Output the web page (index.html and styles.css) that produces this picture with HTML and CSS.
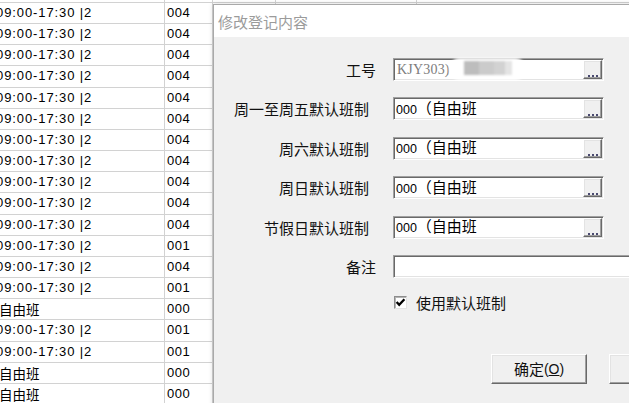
FILE: index.html
```html
<!DOCTYPE html>
<html>
<head>
<meta charset="utf-8">
<link rel="stylesheet" href="styles.css">
</head>
<body>
<div class="sheet">
  <div class="cell">09:00-17:30 |2</div><div class="cell c2">004</div><div class="cell"></div><div class="cell"></div><div class="cell"></div>
  <div class="cell">09:00-17:30 |2</div><div class="cell c2">004</div><div class="cell"></div><div class="cell"></div><div class="cell"></div>
  <div class="cell">09:00-17:30 |2</div><div class="cell c2">004</div><div class="cell"></div><div class="cell"></div><div class="cell"></div>
  <div class="cell">09:00-17:30 |2</div><div class="cell c2">004</div><div class="cell"></div><div class="cell"></div><div class="cell"></div>
  <div class="cell">09:00-17:30 |2</div><div class="cell c2">004</div><div class="cell"></div><div class="cell"></div><div class="cell"></div>
  <div class="cell">09:00-17:30 |2</div><div class="cell c2">004</div><div class="cell"></div><div class="cell"></div><div class="cell"></div>
  <div class="cell">09:00-17:30 |2</div><div class="cell c2">004</div><div class="cell"></div><div class="cell"></div><div class="cell"></div>
  <div class="cell">09:00-17:30 |2</div><div class="cell c2">004</div><div class="cell"></div><div class="cell"></div><div class="cell"></div>
  <div class="cell">09:00-17:30 |2</div><div class="cell c2">004</div><div class="cell"></div><div class="cell"></div><div class="cell"></div>
  <div class="cell">09:00-17:30 |2</div><div class="cell c2">004</div><div class="cell"></div><div class="cell"></div><div class="cell"></div>
  <div class="cell">09:00-17:30 |2</div><div class="cell c2">004</div><div class="cell"></div><div class="cell"></div><div class="cell"></div>
  <div class="cell">09:00-17:30 |2</div><div class="cell c2">004</div><div class="cell"></div><div class="cell"></div><div class="cell"></div>
  <div class="cell">09:00-17:30 |2</div><div class="cell c2">001</div><div class="cell"></div><div class="cell"></div><div class="cell"></div>
  <div class="cell">09:00-17:30 |2</div><div class="cell c2">004</div><div class="cell"></div><div class="cell"></div><div class="cell"></div>
  <div class="cell">09:00-17:30 |2</div><div class="cell c2">001</div><div class="cell"></div><div class="cell"></div><div class="cell"></div>
  <div class="cell cjk">自由班</div><div class="cell c2">000</div><div class="cell"></div><div class="cell"></div><div class="cell"></div>
  <div class="cell">09:00-17:30 |2</div><div class="cell c2">001</div><div class="cell"></div><div class="cell"></div><div class="cell"></div>
  <div class="cell">09:00-17:30 |2</div><div class="cell c2">001</div><div class="cell"></div><div class="cell"></div><div class="cell"></div>
  <div class="cell cjk">自由班</div><div class="cell c2">000</div><div class="cell"></div><div class="cell"></div><div class="cell"></div>
  <div class="cell cjk">自由班</div><div class="cell c2">000</div><div class="cell"></div><div class="cell"></div><div class="cell"></div>
</div>

<div class="dialog">
  <div class="titlebar">修改登记内容</div>
  <div class="dlg-body">
    <div class="form">
      <div class="lbl short">工号</div>
      <div class="field">
        <span class="code">KJY303)</span>
        <span class="redact"><span class="redact-blocks"></span></span>
        <span class="dots-btn"><svg width="17" height="17" viewBox="0 0 17 17"><rect x="4" y="14" width="2" height="2" fill="#4a4a70"/><rect x="8" y="14" width="2" height="2" fill="#4a4a70"/><rect x="12" y="14" width="2" height="2" fill="#4a4a70"/></svg></span>
      </div>

      <div class="lbl">周一至周五默认班制</div>
      <div class="field"><span class="val"><span class="num">000</span>（自由班</span><span class="dots-btn"><svg width="17" height="17" viewBox="0 0 17 17"><rect x="4" y="14" width="2" height="2" fill="#4a4a70"/><rect x="8" y="14" width="2" height="2" fill="#4a4a70"/><rect x="12" y="14" width="2" height="2" fill="#4a4a70"/></svg></span></div>

      <div class="lbl">周六默认班制</div>
      <div class="field"><span class="val"><span class="num">000</span>（自由班</span><span class="dots-btn"><svg width="17" height="17" viewBox="0 0 17 17"><rect x="4" y="14" width="2" height="2" fill="#4a4a70"/><rect x="8" y="14" width="2" height="2" fill="#4a4a70"/><rect x="12" y="14" width="2" height="2" fill="#4a4a70"/></svg></span></div>

      <div class="lbl">周日默认班制</div>
      <div class="field"><span class="val"><span class="num">000</span>（自由班</span><span class="dots-btn"><svg width="17" height="17" viewBox="0 0 17 17"><rect x="4" y="14" width="2" height="2" fill="#4a4a70"/><rect x="8" y="14" width="2" height="2" fill="#4a4a70"/><rect x="12" y="14" width="2" height="2" fill="#4a4a70"/></svg></span></div>

      <div class="lbl">节假日默认班制</div>
      <div class="field"><span class="val"><span class="num">000</span>（自由班</span><span class="dots-btn"><svg width="17" height="17" viewBox="0 0 17 17"><rect x="4" y="14" width="2" height="2" fill="#4a4a70"/><rect x="8" y="14" width="2" height="2" fill="#4a4a70"/><rect x="12" y="14" width="2" height="2" fill="#4a4a70"/></svg></span></div>

      <div class="lbl short">备注</div>
      <div class="field wide"></div>
    </div>

    <div class="check-row">
      <span class="checkbox"><svg width="11" height="11" viewBox="0 0 11 11"><path d="M1.6 5 L4.2 7.8 L9.4 2.2" fill="none" stroke="#000" stroke-width="2.3"/></svg></span>
      <span class="check-text">使用默认班制</span>
    </div>

    <div class="buttons">
      <div class="btn">确定<span class="lat">(<u>O</u>)</span></div>
      <div class="btn">取消<span class="lat">(<u>C</u>)</span></div>
    </div>
  </div>
</div>
</body>
</html>
```

FILE: styles.css
```css
* { box-sizing: border-box; }
html, body { margin: 0; padding: 0; }
body {
  width: 629px;
  height: 403px;
  overflow: hidden;
  position: relative;
  background: #fff;
  font-family: "Liberation Sans", "Noto Sans CJK SC", sans-serif;
  color: #000;
}

.sheet {
  display: grid;
  grid-template-columns: 169px 48px 63px 141px 220px;
  grid-auto-rows: 21.17px;
  margin-left: -4px;
  margin-top: -18.17px;
}
.cell {
  border-right: 1px solid #d2d2d2;
  border-bottom: 1px solid #d2d2d2;
  font-size: 13px;
  letter-spacing: 0.9px;
  line-height: 20px;
  white-space: nowrap;
  overflow: hidden;
}
.cell.c2 { padding-left: 2px; letter-spacing: 0.5px; }
.cell.cjk {
  font-family: "Noto Sans CJK SC", sans-serif;
  font-size: 13.5px;
  letter-spacing: 0;
  padding-left: 3px;
}

.dialog {
  position: absolute;
  left: 213px;
  top: 4px;
  width: 480px;
  height: 420px;
  border: 1px solid #a9a9a9;
  background: #f0f0f0;
  box-shadow: 0 0 5px rgba(0, 0, 0, 0.16);
}
.titlebar {
  height: 32px;
  background: #fff;
  padding-left: 4px;
  display: flex;
  align-items: center;
  font-family: "Noto Sans CJK SC", sans-serif;
  font-size: 15px;
  color: #9b9b9b;
}
.dlg-body { padding-top: 21px; }

.form {
  display: grid;
  grid-template-columns: 179px 211px;
  grid-auto-rows: 23px;
  row-gap: 16.4px;
}
.lbl {
  font-family: "Noto Sans CJK SC", sans-serif;
  font-size: 15px;
  color: #111;
  text-align: right;
  padding-right: 24px;
  line-height: 23px;
  white-space: nowrap;
}
.lbl.short { padding-right: 17px; }

.field {
  position: relative;
  height: 23px;
  background: #fff;
  border: 1px solid;
  border-color: #a0a0a0 #ffffff #ffffff #a0a0a0;
  box-shadow: inset 1px 1px 0 #696969, inset -1px -1px 0 #e3e3e3;
  padding: 1px 1px 1px 2px;
  display: flex;
  align-items: center;
}
.field.wide { width: 270px; }

.val {
  flex: 1;
  font-family: "Noto Sans CJK SC", sans-serif;
  font-size: 15px;
  line-height: 19px;
  white-space: nowrap;
  color: #000;
}
.num {
  font-family: "Liberation Sans", sans-serif;
  font-size: 12.5px;
}
.code {
  flex: 1;
  font-family: "Liberation Serif", serif;
  font-size: 14px;
  letter-spacing: 0.2px;
  color: #7c7c7c;
  line-height: 19px;
  padding-left: 1px;
}
.redact {
  position: absolute;
  left: 55px;
  top: -1px;
  width: 77px;
  height: 22px;
  border-radius: 11px;
  background: #fff;
  filter: blur(1.2px);
}
.redact-blocks {
  display: block;
  margin: 3px 0 0 15px;
  width: 48px;
  height: 14px;
  background: linear-gradient(to right, #bdbdbd 0, #bdbdbd 15px, #cbcbcb 15px, #cbcbcb 30px, #d2d2d2 30px, #d2d2d2 41px, #e4e4e4 41px, #e4e4e4 48px);
}

.dots-btn {
  width: 19px;
  height: 19px;
  flex: none;
  background: #f0f0f0;
  border: 1px solid;
  border-color: #fff #696969 #696969 #fff;
  box-shadow: inset -1px -1px 0 #a0a0a0, inset 1px 1px 0 #e3e3e3;
  display: block;
}
.dots-btn svg { display: block; }

.check-row {
  display: flex;
  align-items: center;
  height: 16px;
  margin-top: 17px;
  padding-left: 180px;
}
.checkbox {
  width: 13px;
  height: 13px;
  background: #fff;
  border: 1px solid;
  border-color: #8d8d8d #e3e3e3 #e3e3e3 #8d8d8d;
  box-shadow: inset 1px 1px 0 #b5b5b5;
  display: flex;
  align-items: center;
  justify-content: center;
}
.checkbox svg { display: block; }
.check-text {
  margin-left: 9px;
  font-family: "Noto Sans CJK SC", sans-serif;
  font-size: 15px;
  color: #111;
}

.buttons {
  display: flex;
  gap: 22px;
  margin-top: 43px;
  padding-left: 277px;
}
.btn {
  width: 96px;
  height: 30px;
  flex: none;
  background: #f0f0f0;
  border: 1px solid;
  border-color: #ffffff #696969 #696969 #ffffff;
  box-shadow: inset -1px -1px 0 #a0a0a0, inset 1px 1px 0 #e3e3e3;
  display: flex;
  align-items: center;
  justify-content: center;
  font-family: "Noto Sans CJK SC", sans-serif;
  font-size: 15px;
  color: #111;
}
.btn .lat {
  font-family: "Liberation Sans", sans-serif;
  font-size: 14px;
}
.btn u { text-underline-offset: 1px; }
```
